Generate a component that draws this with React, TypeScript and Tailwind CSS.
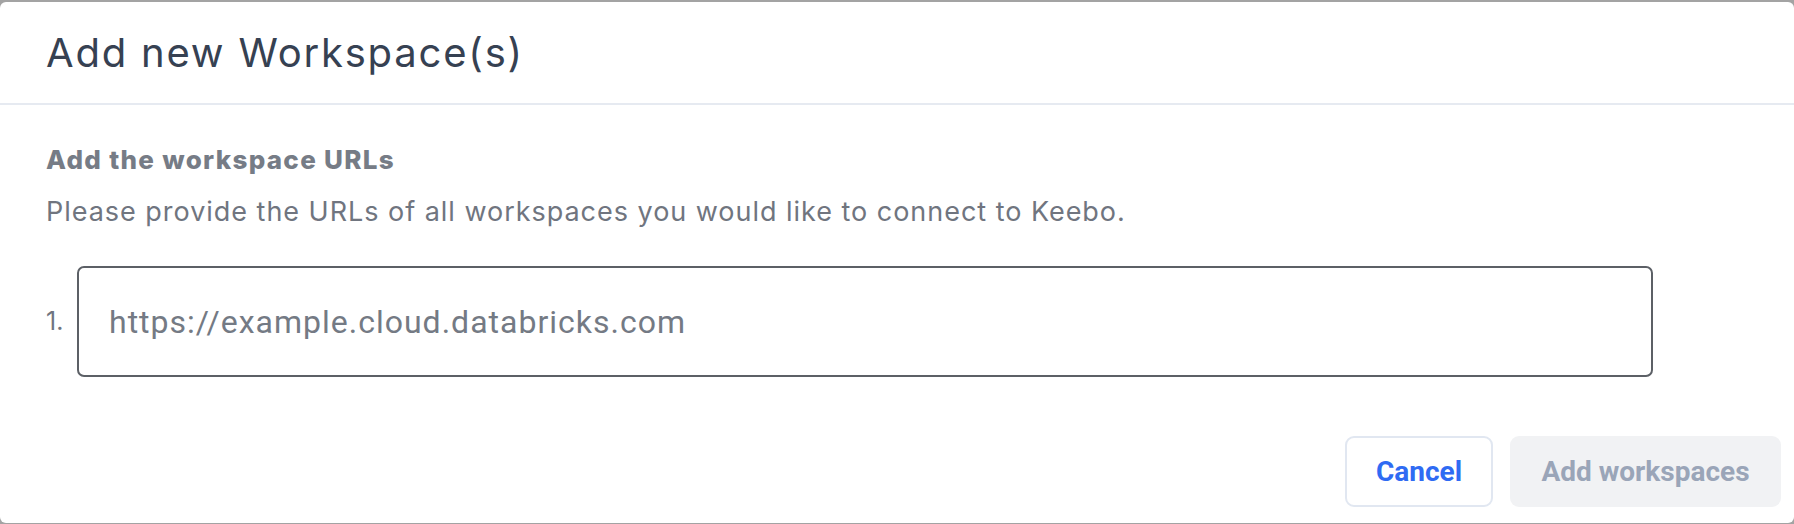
import React from "react";

export default function App() {
  const poppins = { fontFamily: "Inter, 'Noto Sans', sans-serif" };
  return (
    <div className="w-[1794px] h-[524px] bg-[#a3a3a3] overflow-hidden pt-[2px]">
      <div className="h-[521px] bg-white rounded-[6px] flex flex-col">
        <div className="h-[103px] flex items-center px-[46px] border-b-2 border-[#e6eaf1]">
          <h1
            className="text-[40px] leading-none text-[#364152] tracking-[1.8px] font-normal"
            style={poppins}
          >
            Add new Workspace(s)
          </h1>
        </div>
        <div className="flex flex-col pl-[46px] pr-[13px]">
          <div
            className="mt-[37px] text-[26px] leading-[36px] font-extrabold text-[#767c86] tracking-[1.3px]"
            style={poppins}
          >
            Add the workspace URLs
          </div>
          <div
            className="mt-[14px] text-[27px] leading-[40px] text-[#70757f] tracking-[0.97px]"
            style={poppins}
          >
            Please provide the URLs of all workspaces you would like to connect to Keebo.
          </div>
          <div className="mt-[34px] flex items-center">
            <span
              className="w-[31px] text-[25px] text-[#70757f] leading-none"
              style={poppins}
            >
              1.
            </span>
            <div className="w-[1576px] h-[111px] border-2 border-[#5c6066] rounded-[7px] flex items-center px-[30px] pt-[1px]">
              <span
                className="text-[32px] text-[#747a84] tracking-[1px]"
                style={{ fontFamily: "Roboto, 'Liberation Sans', sans-serif" }}
              >
                https://example.cloud.databricks.com
              </span>
            </div>
          </div>
          <div className="mt-[59px] flex justify-end gap-[17px]">
            <button
              className="w-[148px] h-[71px] rounded-[9px] border-2 border-[#e1e7f1] bg-white text-[#2f6bf3] text-[28px] font-bold"
              style={{ fontFamily: "Roboto, 'Liberation Sans', sans-serif" }}
            >
              Cancel
            </button>
            <button
              className="w-[271px] h-[71px] rounded-[9px] bg-[#f1f2f4] text-[#9aa5b8] text-[28px] font-bold"
              style={{ fontFamily: "Roboto, 'Liberation Sans', sans-serif" }}
            >
              Add workspaces
            </button>
          </div>
        </div>
      </div>
    </div>
  );
}
